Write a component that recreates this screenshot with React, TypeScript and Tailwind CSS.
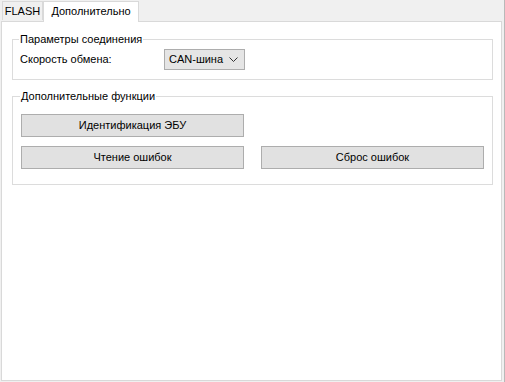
import React from "react";

const font = { fontFamily: '"Segoe UI", "Liberation Sans", Arial, sans-serif' };

function Btn({ children }: { children: React.ReactNode }) {
  return (
    <button className="w-[223px] h-[23px] bg-[#e1e1e1] border border-[#adadad] text-[11px] text-black flex items-center justify-center leading-none">
      {children}
    </button>
  );
}

export default function App() {
  return (
    <div className="w-[505px] h-[382px] bg-[#f0f0f0] flex flex-col text-[11px] text-black border-r border-[#b9b9b9] relative" style={font}>
      <div className="h-[21px] flex items-end pl-[2px] relative z-10">
        <div className="h-[19px] w-[41px] border border-b-0 border-[#d9d9d9] bg-[#f0f0f0] flex items-center justify-center mb-[1px] leading-none pt-[1px]">
          FLASH
        </div>
        <div className="h-[21px] w-[96px] border border-b-0 border-[#d9d9d9] bg-white flex items-center justify-center -mb-[1px] pb-[1px] leading-none">
          Дополнительно
        </div>
      </div>
      <div className="ml-[1px] mr-[2px] h-[360px] bg-white border border-[#d9d9d9] pt-[10px] pl-[10px] pr-[8px] flex flex-col">
        <fieldset className="border border-[#dcdcdc] h-[48px] pl-[7px] pr-[8px] m-0 pt-0 min-w-0">
          <legend className="px-[1px] leading-[14px] -ml-[1px]">Параметры соединения</legend>
          <div className="flex items-center h-[23px] mt-[2px]">
            <span className="w-[144px]">Скорость обмена:</span>
            <div className="w-[81px] h-[21px] bg-[#e5e5e5] border border-[#adadad] flex items-center pl-[4px] pr-[6px] justify-between leading-none">
              <span>CAN-шина</span>
              <svg width="9" height="6" viewBox="0 0 9 6" className="mt-[1px]">
                <path d="M0.5 0.5 L4.5 4.5 L8.5 0.5" fill="none" stroke="#333" strokeWidth="1" />
              </svg>
            </div>
          </div>
        </fieldset>
        <fieldset className="mt-[9px] border border-[#dcdcdc] h-[96px] pl-[8px] pr-[8px] m-0 pt-0 min-w-0">
          <legend className="px-[1px] leading-[14px] -ml-[1px]">Дополнительные функции</legend>
          <div className="mt-[11px] flex flex-col gap-[9px]">
            <Btn>Идентификация ЭБУ</Btn>
            <div className="flex justify-between">
              <Btn>Чтение ошибок</Btn>
              <Btn>Сброс ошибок</Btn>
            </div>
          </div>
        </fieldset>
      </div>
    </div>
  );
}
